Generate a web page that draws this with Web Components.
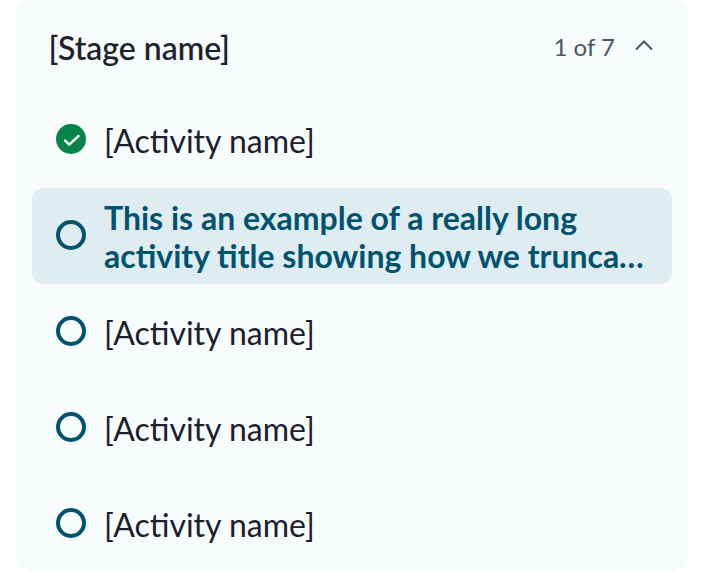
<!DOCTYPE html>
<html><head><meta charset="utf-8"><style>
html,body{margin:0;padding:0;background:#fff}
body{width:704px;height:572px;overflow:hidden;font-family:Lato,"Open Sans",sans-serif}
</style></head><body>
<template id="stage-t"><style>
:host{display:flex;flex-direction:column;box-sizing:border-box;width:672px;height:572px;margin:0 16px;background:#f7fbfc;border-radius:16px;padding:0 16px}
header{display:flex;align-items:center;height:92px;padding:0 16px 0 17px;box-sizing:border-box;margin-top:1px;margin-bottom:-1px}
h2{margin:2px 0 0 -.5px;flex:1;font:500 32px/40px Lato,sans-serif;color:#1a202c;-webkit-text-stroke:.15px #1a202c}
.count{font:400 24px/32px Lato,sans-serif;color:#4a5568}
svg{display:block;margin-left:19px;margin-right:2px;margin-top:-4px}
</style><header><h2><slot name="title"></slot></h2><span class="count"><slot name="count"></slot></span>
<svg width="20" height="20" viewBox="0 0 20 20" fill="none" stroke="#4a5568" stroke-width="2"><path d="M2 14.500 10 6.500 18 14.500"/></svg></header><slot></slot></template>
<template id="act-t"><style>
:host{display:flex;align-items:center;box-sizing:border-box;height:96px;padding:0 24px;gap:18px;border-radius:12px;color:#1a202c;font:400 32px/38px Lato,sans-serif;font-feature-settings:"liga" 1}
:host([current]){background:#dfedf3;color:#00536f;font-weight:700}
svg{flex:none;display:block}
#i{flex:none;margin-top:-2px}
.t{display:-webkit-box;-webkit-box-orient:vertical;-webkit-line-clamp:2;overflow:hidden;min-width:0;flex:1;margin-top:2px}
</style><span id="i"></span><span class="t"><slot></slot></span></template>
<script>
class StageCard extends HTMLElement{constructor(){super();this.attachShadow({mode:'open'}).append(document.getElementById('stage-t').content.cloneNode(true))}}
class ActivityRow extends HTMLElement{constructor(){super();this.attachShadow({mode:'open'}).append(document.getElementById('act-t').content.cloneNode(true));}
connectedCallback(){this.shadowRoot.getElementById('i').innerHTML=this.hasAttribute('done')?'<svg width="30" height="30" viewBox="0 0 30 30"><circle cx="15" cy="15" r="15" fill="#068447"/><path d="M9 16.500 13.200 20.700 22.500 12" fill="none" stroke="#fff" stroke-width="2.400" stroke-linecap="round" stroke-linejoin="round"/></svg>':'<svg width="30" height="30" viewBox="0 0 30 30"><circle cx="15" cy="15" r="13" fill="none" stroke="#00536f" stroke-width="4"/></svg>';}}
customElements.define('stage-card',StageCard);customElements.define('activity-row',ActivityRow);
</script>
<stage-card><span slot="title">[Stage name]</span><span slot="count">1 of 7</span>
<activity-row done>[Activity name]</activity-row>
<activity-row current>This is an example of a really long activity title showing how we truncate long titles that run over two lines</activity-row>
<activity-row>[Activity name]</activity-row>
<activity-row>[Activity name]</activity-row>
<activity-row>[Activity name]</activity-row>
</stage-card>
</body></html>
